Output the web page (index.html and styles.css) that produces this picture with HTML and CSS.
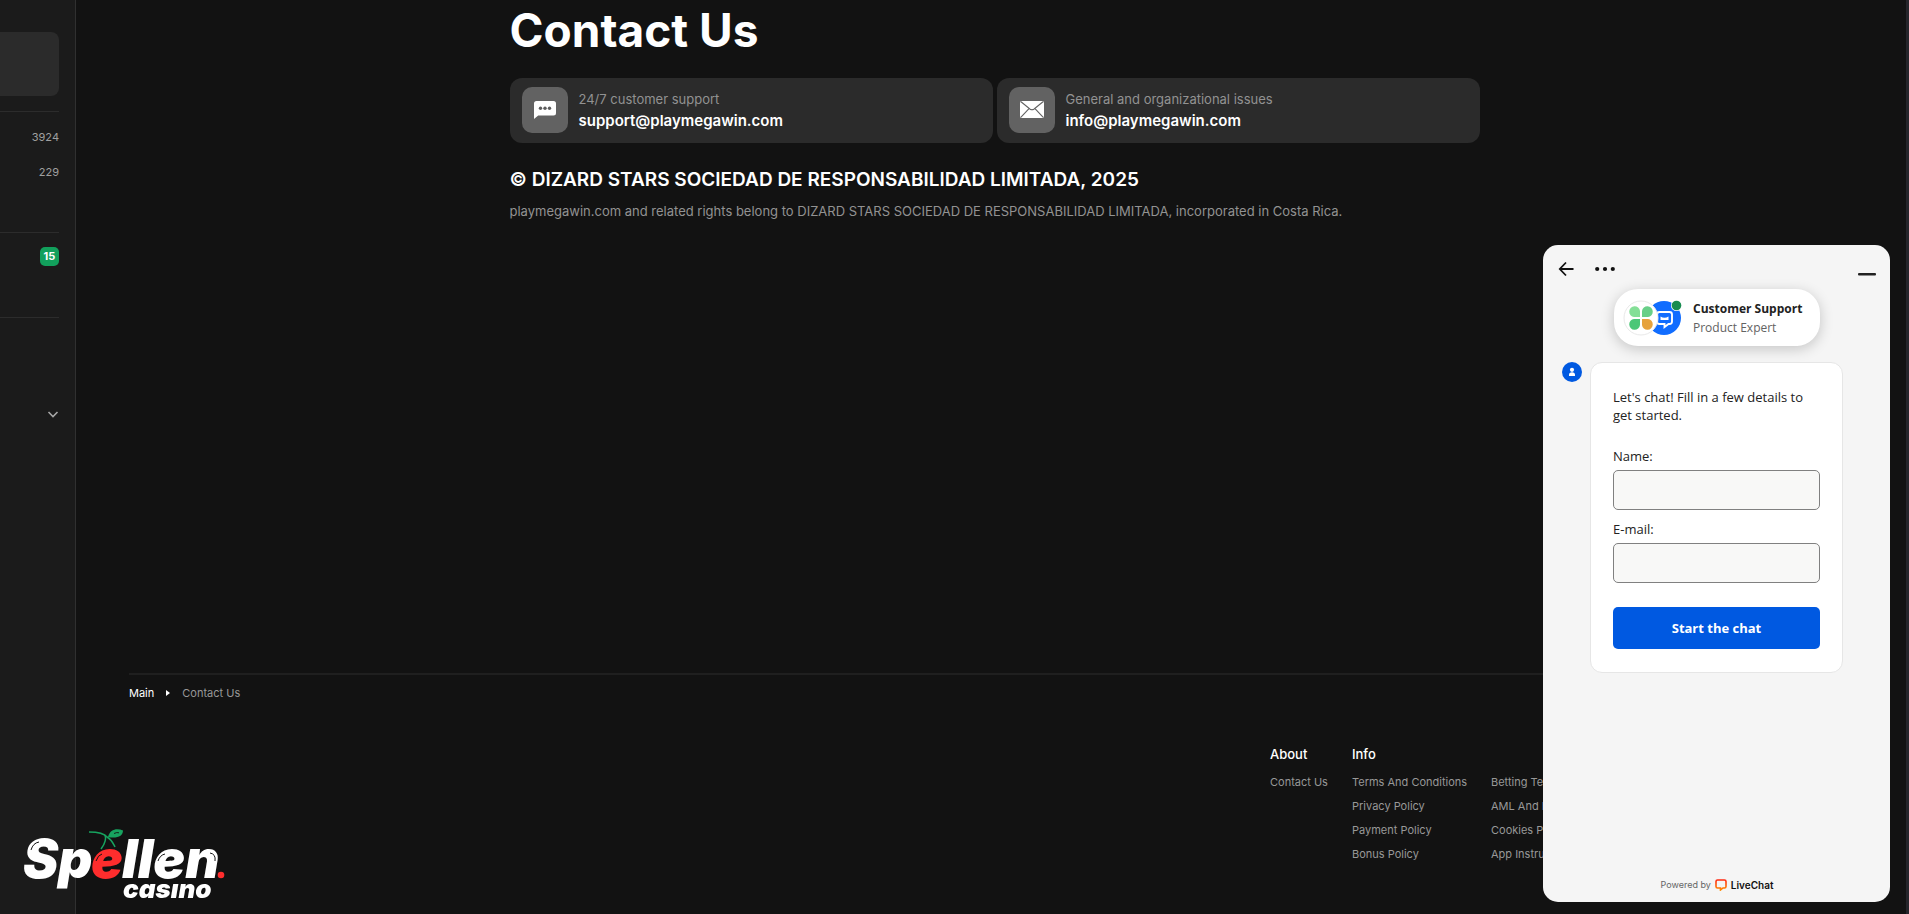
FILE: index.html
```html
<!DOCTYPE html>
<html lang="en">
<head>
<meta charset="utf-8">
<meta name="viewport" content="width=device-width, initial-scale=1">
<title>Contact Us</title>
<link rel="stylesheet" href="styles.css">
</head>
<body>
<div class="page">
  <aside class="sidebar">
    <div class="side-banner"></div>
    <div class="side-group side-counts">
      <span>3924</span>
      <span>229</span>
    </div>
    <div class="side-group side-promo"><span class="badge">15</span></div>
    <div class="side-group side-more">
      <button class="icon-button" type="button" aria-label="Expand">
        <svg width="12" height="12" viewBox="0 0 12 12" fill="none" stroke="#a6a6a6" stroke-width="1.6"><path d="M1.500 3 6 7.500l4.500-4.500"/></svg>
      </button>
    </div>
  </aside>

  <div class="body">
    <main class="content">
      <h1 class="title">Contact Us</h1>
      <div class="cards">
        <a class="card" href="mailto:support@playmegawin.com">
          <span class="card-icon">
            <svg width="22" height="18" viewBox="0 0 22 18"><path fill="#fff" d="M2.500 0h17A2.500 2.500 0 0 1 22 2.500v9.500a2.500 2.500 0 0 1-2.500 2.500H4.200L0 18V2.500A2.500 2.500 0 0 1 2.500 0z"/><g fill="#5c5c5c"><circle cx="6.500" cy="7.200" r="1.700"/><circle cx="11" cy="7.200" r="1.700"/><circle cx="15.500" cy="7.200" r="1.700"/></g></svg>
          </span>
          <span class="card-text"><span class="card-label">24/7 customer support</span><span class="card-mail">support@playmegawin.com</span></span>
        </a>
        <a class="card" href="mailto:info@playmegawin.com">
          <span class="card-icon">
            <svg width="24" height="17" viewBox="0 0 24 17"><rect width="24" height="17" rx="2" fill="#fff"/><path d="m1 .8 9.200 7.400q1.800 1.200 3.600 0L23 .8M1 16.200l8-8.500M23 16.200l-8-8.500" fill="none" stroke="#626262" stroke-width="1.100"/></svg>
          </span>
          <span class="card-text"><span class="card-label">General and organizational issues</span><span class="card-mail">info@playmegawin.com</span></span>
        </a>
      </div>
      <h2 class="company">© DIZARD STARS SOCIEDAD DE RESPONSABILIDAD LIMITADA, 2025</h2>
      <p class="rights">playmegawin.com and related rights belong to DIZARD STARS SOCIEDAD DE RESPONSABILIDAD LIMITADA, incorporated in Costa Rica.</p>
    </main>

    <footer class="footer">
      <nav class="crumbs" aria-label="Breadcrumb">
        <a class="crumb-main" href="#">Main</a>
        <svg width="4" height="6" viewBox="0 0 4 6"><path d="M0 0l4 3-4 3z" fill="#fff"/></svg>
        <span>Contact Us</span>
      </nav>
      <nav class="links" aria-label="Footer">
        <div class="links-col"><h3>About</h3><a href="#">Contact Us</a></div>
        <div class="links-col"><h3>Info</h3><a href="#">Terms And Conditions</a><a href="#">Privacy Policy</a><a href="#">Payment Policy</a><a href="#">Bonus Policy</a></div>
        <div class="links-col links-rest"><a href="#">Betting Terms</a><a href="#">AML And KYC</a><a href="#">Cookies Policy</a><a href="#">App Instructions</a></div>
      </nav>
    </footer>
  </div>
</div>

<a class="brand" href="#" aria-label="Spellen casino">
  <svg width="204" height="76" viewBox="0 0 204 76">
    <g class="brand-word">
      <text x="-1" y="49">Sp</text>
      <text class="brand-red" x="67" y="49">e</text>
      <text x="98" y="49">llen</text>
    </g>
    <circle cx="197" cy="46" r="3.300" fill="#ff2d2d"/>
    <text class="brand-sub" x="99" y="69">casıno</text>
    <g fill="none" stroke="#17a35f" stroke-width="1.500">
      <path d="M65 3C73 3 80 4 83 8c5 3 6 6 8 10"/>
      <path d="M81 6c2 5-1 10-4 14"/>
    </g>
    <path d="M84 8C86 0 93-1 99 1.500 99 7 93 10 84 8z" fill="#17a35f"/>
    <path d="M90 4.500q3-1.500 5-.7" fill="none" stroke="#121212" stroke-width=".9"/>
    <g fill="none" stroke="#121212" stroke-width="1">
      <path d="M7 21q2-7 8-8M72 32q2-6 6-7M134 32q2-6 7-7M186 24q6 1 5 8"/>
    </g>
  </svg>
</a>

<section class="chat" aria-label="Chat">
  <header class="chat-bar">
    <button class="icon-button" type="button" aria-label="Back">
      <svg width="16" height="16" viewBox="0 0 16 16" fill="none" stroke="#111" stroke-width="1.800"><path d="M8 1.500 1.800 8 8 14.500M2 8h13.500"/></svg>
    </button>
    <button class="icon-button" type="button" aria-label="More">
      <svg width="20" height="6" viewBox="0 0 20 6" fill="#111"><circle cx="2.200" cy="3" r="2.100"/><circle cx="10" cy="3" r="2.100"/><circle cx="17.800" cy="3" r="2.100"/></svg>
    </button>
    <button class="icon-button chat-min" type="button" aria-label="Minimize">
      <svg width="18" height="14" viewBox="0 0 18 14"><rect y="11" width="18" height="2.400" rx="1" fill="#222"/></svg>
    </button>
  </header>
  <div class="agent">
    <svg width="60" height="36" viewBox="0 0 60 36">
      <circle cx="41" cy="18" r="17" fill="#116dff"/>
      <path d="M36.500 12h10a2.500 2.500 0 0 1 2.500 2.500v7a2.500 2.500 0 0 1-2.500 2.500h-1l-4 3v-3h-5a2.500 2.500 0 0 1-2.500-2.500v-7a2.500 2.500 0 0 1 2.500-2.500z" fill="none" stroke="#fff" stroke-width="1.900"/>
      <path d="M37.500 16.500q4 2.500 8 0v3.500h-8z" fill="#fff"/>
      <circle cx="18" cy="18" r="17" fill="#fff" stroke="#e9e9e9"/>
      <path d="M17 17h-6a5.400 5.400 0 1 1 6-6z" fill="#84df97"/>
      <path d="M19 17v-6a5.400 5.400 0 1 1 6 6z" fill="#68cf88"/>
      <path d="M17 19v6a5.400 5.400 0 1 1-6-6z" fill="#4bc777"/>
      <path d="M19 19h6a5.400 5.400 0 1 1-6 6z" fill="#e6a23d"/>
      <circle cx="53.500" cy="5.500" r="5.500" fill="#fff"/><circle cx="53.500" cy="5.500" r="4.800" fill="#188c50"/>
    </svg>
    <div class="agent-text"><strong>Customer Support</strong><span>Product Expert</span></div>
  </div>
  <div class="chat-row">
    <svg class="chat-avatar" width="20" height="20" viewBox="0 0 20 20"><circle cx="10" cy="10" r="10" fill="#0059e1"/><circle cx="10" cy="7.800" r="2.100" fill="#fff"/><path d="M7 14v-1a3 2.700 0 0 1 6 0v1z" fill="#fff"/></svg>
    <form class="chat-form">
      <p>Let's chat! Fill in a few details to get started.</p>
      <label for="name">Name:</label>
      <input id="name" type="text">
      <label for="email">E-mail:</label>
      <input id="email" type="email">
      <button class="start" type="button">Start the chat</button>
    </form>
  </div>
  <footer class="powered">
    <span>Powered by</span>
    <svg width="12" height="12" viewBox="0 0 12 12"><defs><linearGradient id="lc" x2="0" y2="1"><stop stop-color="#ff2a12"/><stop offset="1" stop-color="#ff8a00"/></linearGradient></defs><path d="M2.500 1h7A1.500 1.500 0 0 1 11 2.500v5A1.500 1.500 0 0 1 9.500 9H8l-2.500 2V9h-3A1.500 1.500 0 0 1 1 7.500v-5A1.500 1.500 0 0 1 2.500 1z" fill="none" stroke="url(#lc)" stroke-width="1.600"/></svg>
    <a href="#">LiveChat</a>
  </footer>
</section>
</body>
</html>
```

FILE: styles.css
```css
* { box-sizing: border-box; }

body {
  margin: 0;
  background: #121212;
  color: #fff;
  font-family: Inter, "Liberation Sans", sans-serif;
}

a { color: inherit; text-decoration: none; }
svg { display: block; flex: none; }
h1, h2, h3, p { margin: 0; }

.icon-button {
  display: block;
  padding: 0;
  border: 0;
  background: none;
  cursor: pointer;
}

.page {
  display: flex;
  min-height: 100vh;
  border-right: 3px solid #25252b;
}

/* sidebar */
.sidebar {
  flex: none;
  width: 76px;
  padding: 32px 16px 0 0;
  background: #1b1b1b;
  border-right: 1px solid #303030;
  color: #a0a0a0;
  font-size: 11px;
  line-height: 35px;
}

.side-banner {
  height: 64px;
  margin-bottom: 15px;
  border-radius: 0 8px 8px 0;
  background: #2b2b2b;
}

.side-group {
  display: flex;
  flex-direction: column;
  align-items: flex-end;
  border-top: 1px solid #2c2c2c;
}

.side-counts { height: 121px; padding-top: 8px; }
.side-promo { height: 85px; padding-top: 14px; }
.side-more { padding-top: 91px; }

.badge {
  width: 19px;
  height: 19px;
  border-radius: 5px;
  background: #12a05c;
  color: #fff;
  font-size: 11px;
  font-weight: 700;
  line-height: 19px;
  text-align: center;
}

/* main column */
.body {
  flex: 1;
  min-width: 0;
  display: flex;
  flex-direction: column;
  padding: 0 46px 0 53px;
}

.content {
  width: 100%;
  max-width: 970px;
  margin: 0 auto;
}

.title {
  font-size: 46px;
  font-weight: 700;
  line-height: 60px;
}

.cards {
  display: grid;
  grid-template-columns: 1fr 1fr;
  gap: 4px;
  margin-top: 18px;
}

.card {
  display: flex;
  align-items: center;
  gap: 11px;
  height: 65px;
  padding: 0 12px 2px;
  border-radius: 12px;
  background: #2b2b2b;
}

.card-icon {
  display: grid;
  place-items: center;
  width: 46px;
  height: 46px;
  border-radius: 10px;
  background: #626262;
}

.card-text { display: flex; flex-direction: column; line-height: 21px; }
.card-label { color: #929292; font-size: 13px; }
.card-mail { font-size: 15px; font-weight: 600; }

.company {
  margin-top: 23px;
  font-size: 19px;
  font-weight: 600;
  line-height: 28px;
}

.rights {
  margin-top: 7px;
  color: #929292;
  font-size: 13px;
  line-height: 20px;
}

/* footer */
.footer {
  margin-top: auto;
  border-top: 2px solid #1f1f1f;
  color: #989898;
  font-size: 11px;
}

.crumbs {
  display: flex;
  align-items: center;
  gap: 12px;
  padding-top: 10px;
  line-height: 16px;
}

.crumb-main { color: #fff; }

.links {
  display: grid;
  grid-template-columns: 58px 115px 369px;
  column-gap: 24px;
  justify-content: end;
  padding: 41px 0 48px;
  white-space: nowrap;
}

.links-col { display: flex; flex-direction: column; line-height: 24px; }
.links-col h3 { margin-bottom: 4px; color: #fff; font-size: 13px; font-weight: 500; }
.links-rest { padding-top: 28px; }

/* brand mark */
.brand { position: fixed; left: 24px; bottom: 9px; }
.brand svg { overflow: visible; }

.brand text {
  fill: #fff;
  font-family: Inter, sans-serif;
  font-style: italic;
  font-weight: 900;
}

.brand-word text { font-size: 53px; }
.brand-word .brand-red { fill: #ff2d2d; }
.brand .brand-sub { font-size: 26px; }

/* chat window */
.chat {
  position: fixed;
  right: 19px;
  bottom: 12px;
  display: flex;
  flex-direction: column;
  width: 347px;
  height: 657px;
  padding: 15px 14px 8px 15px;
  border-radius: 15px;
  background: #f5f5f5;
  color: #222;
  font-family: "Open Sans", "Noto Sans", sans-serif;
  font-size: 13px;
  line-height: 18px;
}

.chat-bar { display: flex; align-items: center; gap: 21px; height: 18px; }
.chat-min { margin-left: auto; }

.agent {
  display: flex;
  align-items: center;
  gap: 10px;
  align-self: center;
  width: 206px;
  height: 57px;
  margin: 11px 0 16px;
  padding: 0 9px;
  border-radius: 24px;
  background: #fff;
  box-shadow: 0 3px 14px #00000033;
  white-space: nowrap;
}

.agent-text { display: flex; flex-direction: column; font-size: 12px; line-height: 19px; }
.agent-text span { color: #626262; }

.chat-row { display: flex; gap: 8px; padding-left: 4px; }

.chat-form {
  display: flex;
  flex-direction: column;
  width: 253px;
  padding: 25px 22px 23px;
  border: 1px solid #e6e6e6;
  border-radius: 12px;
  background: #fff;
}

.chat-form p { margin-bottom: 23px; }
.chat-form label { margin-bottom: 5px; }

.chat-form input {
  width: 100%;
  height: 40px;
  margin-bottom: 10px;
  padding: 0 10px;
  border: 1px solid #808080;
  border-radius: 5px;
  background: #f8f8f7;
  font: inherit;
}

.start {
  height: 42px;
  margin-top: 14px;
  border: 0;
  border-radius: 5px;
  background: #0059e1;
  color: #fff;
  font: inherit;
  font-weight: 700;
}

.powered {
  display: flex;
  align-items: center;
  justify-content: center;
  gap: 4px;
  margin-top: auto;
  color: #666;
  font-family: Inter, sans-serif;
  font-size: 9px;
}

.powered a { color: #111; font-size: 10px; font-weight: 600; }
```
